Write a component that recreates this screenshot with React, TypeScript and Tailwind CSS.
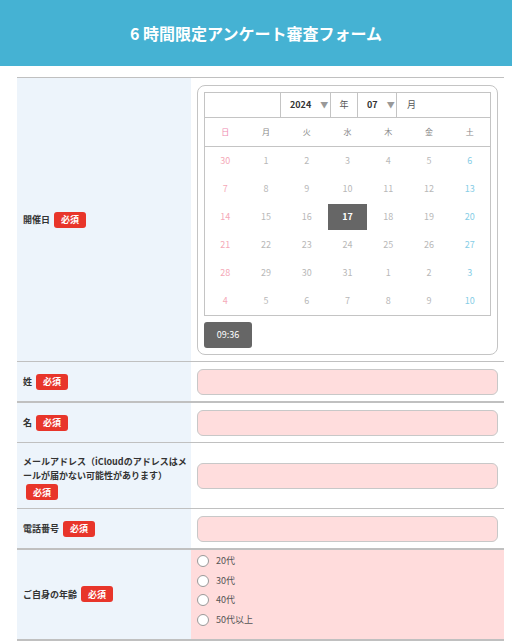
import React from 'react'

const font = { fontFamily: '"Noto Sans CJK JP", "Noto Sans", sans-serif' }

const Badge = () => (
  <span className="inline-flex items-center justify-center h-[16px] w-[32px] rounded-[3px] bg-[#e8352a] text-white text-[9px] font-bold leading-none">
    必須
  </span>
)

const weeks = [
  [30, 1, 2, 3, 4, 5, 6],
  [7, 8, 9, 10, 11, 12, 13],
  [14, 15, 16, 17, 18, 19, 20],
  [21, 22, 23, 24, 25, 26, 27],
  [28, 29, 30, 31, 1, 2, 3],
  [4, 5, 6, 7, 8, 9, 10],
]
const dows = ['日', '月', '火', '水', '木', '金', '土']

const dayColor = (i: number) => {
  if (i === 0) return 'text-[#f5a9b8]'
  if (i === 6) return 'text-[#86cde6]'
  return 'text-[#b8b8b8]'
}

const Calendar = () => (
  <div className="border border-[#c4c4c4] rounded-[8px] p-[6px]">
    <div className="border border-[#c4c4c4]">
      {/* year / month selector */}
      <div className="flex h-[25px] border-b border-[#c4c4c4] text-[9px]">
        <div className="w-[76px] border-r border-[#c4c4c4]" />
        <div className="w-[50px] border-r border-[#c4c4c4] flex items-center pl-[9px] gap-[9px]">
          <span className="font-bold text-[#333]">2024</span>
          <span className="text-[#999] text-[8px]">▼</span>
        </div>
        <div className="w-[27px] border-r border-[#c4c4c4] flex items-center justify-center text-[#555]">年</div>
        <div className="w-[39px] border-r border-[#c4c4c4] flex items-center pl-[9px] gap-[9px]">
          <span className="font-bold text-[#333]">07</span>
          <span className="text-[#999] text-[8px]">▼</span>
        </div>
        <div className="flex-1 flex items-center pl-[10px] text-[#555]">月</div>
      </div>
      <div className="grid grid-cols-7 h-[29px] border-b border-[#c4c4c4] text-[8px]">
        {dows.map((d, i) => (
          <div key={d} className={`flex items-center justify-center ${i === 0 ? 'text-[#ee88b0]' : 'text-[#888]'}`}>
            {d}
          </div>
        ))}
      </div>
      {weeks.map((w, r) => (
        <div key={r} className="grid grid-cols-7 h-[28px] text-[9px]">
          {w.map((d, i) =>
            r === 2 && i === 3 ? (
              <div key={i} className="flex items-center justify-center p-[1px]">
                <div className="w-full h-full bg-[#666] text-white font-bold flex items-center justify-center">{d}</div>
              </div>
            ) : (
              <div key={i} className={`flex items-center justify-center ${dayColor(i)}`}>
                {d}
              </div>
            )
          )}
        </div>
      ))}
    </div>
    <div className="mt-[6px] w-[48px] h-[26px] rounded-[3px] bg-[#666] text-white text-[9px] flex items-center justify-center">
      09:36
    </div>
  </div>
)

const Input = () => (
  <div className="h-[26px] rounded-[6px] border border-[#c8c8c8] bg-[#ffdddd]" />
)

const Row = ({
  label,
  children,
  border = 'border-b',
  right = 'bg-white',
  pad = 'px-[6px] pt-[7px] pb-[6px]',
}: {
  label: React.ReactNode
  children: React.ReactNode
  border?: string
  right?: string
  pad?: string
}) => (
  <div className={`flex ${border} border-[#c0c0c0]`}>
    <div className="w-[174px] shrink-0 bg-[#edf4fb] flex items-center pl-[6px] pr-[4px] text-[9px] font-bold text-[#333]">
      {label}
    </div>
    <div className={`flex-1 ${right} ${pad} flex flex-col justify-center`}>{children}</div>
  </div>
)

const Label = ({ text }: { text: string }) => (
  <span className="flex items-center gap-[4px]">
    {text} <Badge />
  </span>
)

export default function App() {
  const ages = ['20代', '30代', '40代', '50代以上']
  return (
    <div className="bg-white min-h-[641px]" style={font}>
      <div className="h-[66px] bg-[#45b2d3] flex items-center justify-center">
        <h1 className="text-white text-[16px] font-bold">6 時間限定アンケート審査フォーム</h1>
      </div>
      <div className="ml-[17px] mr-[8px] mt-[11px] border-t border-[#c0c0c0]">
        <Row label={<Label text="開催日" />}>
          <Calendar />
        </Row>
        <Row border="border-b-2" label={<Label text="姓" />}>
          <Input />
        </Row>
        <Row label={<Label text="名" />}>
          <Input />
        </Row>
        <Row
          pad="px-[6px] py-[19px]"
          label={
            <div className="leading-[14px] pt-[12px] pb-[8px]">
              メールアドレス（iCloudのアドレスはメールが届かない可能性があります）
              <div className="mt-[1px] ml-[3px]">
                <Badge />
              </div>
            </div>
          }
        >
          <Input />
        </Row>
        <Row border="border-b-2" label={<Label text="電話番号" />}>
          <Input />
        </Row>
        <Row
          border="border-b-2"
          right="bg-[#ffdcdc]"
          pad="px-[6px] pt-[5px] pb-[13px]"
          label={<Label text="ご自身の年齢" />}
        >
          <div className="flex flex-col gap-[7.5px]">
            {ages.map((a) => (
              <label key={a} className="flex items-center gap-[7px] h-[12px] text-[9px] text-[#555]">
                <span className="w-[12px] h-[12px] rounded-full border border-[#999] bg-white" />
                {a}
              </label>
            ))}
          </div>
        </Row>
      </div>
    </div>
  )
}
